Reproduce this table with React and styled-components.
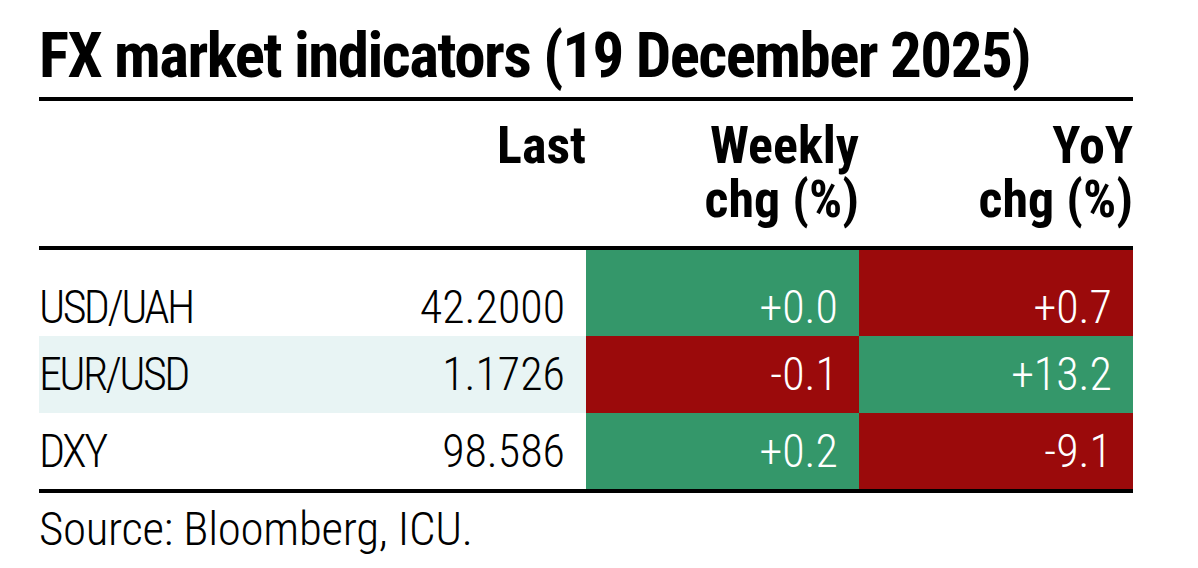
import React from "react";
import styled, { createGlobalStyle } from "styled-components";

const GlobalStyle = createGlobalStyle`
  html, body { margin: 0; padding: 0; background: #ffffff; }
  body { font-family: Roboto, "Liberation Sans", sans-serif; color: #000; }
`;

const Page = styled.div`
  width: 1198px;
  height: 568px;
  box-sizing: border-box;
  padding: 21px 65px 0 39px;
`;

const Title = styled.h1`
  margin: 0 0 6px 0;
  font-family: Roboto, "Liberation Sans", sans-serif;
  font-weight: 700;
  font-stretch: 75%;
  font-size: 63px;
  line-height: 70px;
  letter-spacing: -1.55px;
  white-space: nowrap;
`;

const Table = styled.div`
  display: grid;
  grid-template-columns: 300px 247px 273px 274px;
  border-top: 4px solid #000;
  border-bottom: 4px solid #000;
`;

const HeaderCell = styled.div`
  padding: 18px 0 19px 0;
  font-weight: 700;
  font-stretch: 80%;
  font-size: 52px;
  line-height: 54px;
  text-align: right;
  border-bottom: 4px solid #000;
`;

const colors = {
  up: "#34976a",
  down: "#9b0a0b",
};

const Cell = styled.div`
  padding: ${(p) => (p.$first ? "34px 21px 6px 0" : "15px 21px 15px 0")};
  height: ${(p) => (p.$first ? "46px" : p.$h)};
  font-weight: 300;
  font-stretch: ${(p) => (p.$left ? "75%" : "82%")};
  letter-spacing: ${(p) => (p.$left ? "-2.6px" : "0")};
  font-size: 46px;
  line-height: 46px;
  text-align: ${(p) => (p.$left ? "left" : "right")};
  background: ${(p) => (p.$tone ? colors[p.$tone] : p.$shade ? "#e8f4f4" : "transparent")};
  color: ${(p) => (p.$tone ? "#ffffff" : "#000000")};
  white-space: nowrap;
`;

const Source = styled.div`
  margin-top: 12px;
  font-weight: 300;
  font-stretch: 78%;
  font-size: 47px;
  line-height: 48px;
  letter-spacing: -0.3px;
  white-space: nowrap;
`;

const rows = [
  { name: "USD/UAH", last: "42.2000", w: "+0.0", wt: "up", y: "+0.7", yt: "down" },
  { name: "EUR/USD", last: "1.1726", w: "-0.1", wt: "down", y: "+13.2", yt: "up" },
  { name: "DXY", last: "98.586", w: "+0.2", wt: "up", y: "-9.1", yt: "down" },
];

export default function App() {
  return (
    <Page>
      <GlobalStyle />
      <Title>FX market indicators (19 December 2025)</Title>
      <Table>
        <HeaderCell />
        <HeaderCell>Last</HeaderCell>
        <HeaderCell>
          Weekly
          <br />
          chg (%)
        </HeaderCell>
        <HeaderCell>
          YoY
          <br />
          chg (%)
        </HeaderCell>
        {rows.map((r, i) => {
          const first = i === 0;
          const shade = i === 1;
          const h = i === 1 ? "47px" : "46px";
          return (
            <React.Fragment key={r.name}>
              <Cell $left $first={first} $shade={shade} $h={h}>{r.name}</Cell>
              <Cell $first={first} $shade={shade} $h={h}>{r.last}</Cell>
              <Cell $first={first} $tone={r.wt} $h={h}>{r.w}</Cell>
              <Cell $first={first} $tone={r.yt} $h={h}>{r.y}</Cell>
            </React.Fragment>
          );
        })}
      </Table>
      <Source>Source: Bloomberg, ICU.</Source>
    </Page>
  );
}
